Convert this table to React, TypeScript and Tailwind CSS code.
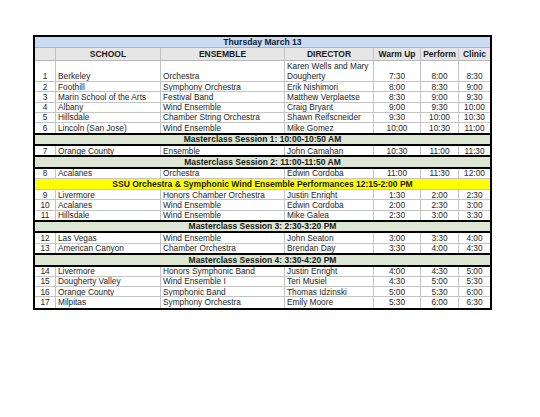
import React from 'react';

type Row =
  | { kind: 'data'; n: number; school: string; ensemble: string; director: string; warm: string; perform: string; clinic: string }
  | { kind: 'session' | 'ssu'; label: string };

const rows: Row[] = [
  { kind: 'data', n: 2, school: 'Foothill', ensemble: 'Symphony Orchestra', director: 'Erik Nishimori', warm: '8:00', perform: '8:30', clinic: '9:00' },
  { kind: 'data', n: 3, school: 'Marin School of the Arts', ensemble: 'Festival Band', director: 'Matthew Verplaetse', warm: '8:30', perform: '9:00', clinic: '9:30' },
  { kind: 'data', n: 4, school: 'Albany', ensemble: 'Wind Ensemble', director: 'Craig Bryant', warm: '9:00', perform: '9:30', clinic: '10:00' },
  { kind: 'data', n: 5, school: 'Hillsdale', ensemble: 'Chamber String Orchestra', director: 'Shawn Reifscneider', warm: '9:30', perform: '10:00', clinic: '10:30' },
  { kind: 'data', n: 6, school: 'Lincoln (San Jose)', ensemble: 'Wind Ensemble', director: 'Mike Gomez', warm: '10:00', perform: '10:30', clinic: '11:00' },
  { kind: 'session', label: 'Masterclass Session 1: 10:00-10:50 AM' },
  { kind: 'data', n: 7, school: 'Orange County', ensemble: 'Ensemble', director: 'John Camahan', warm: '10:30', perform: '11:00', clinic: '11:30' },
  { kind: 'session', label: 'Masterclass Session 2: 11:00-11:50 AM' },
  { kind: 'data', n: 8, school: 'Acalanes', ensemble: 'Orchestra', director: 'Edwin Cordoba', warm: '11:00', perform: '11:30', clinic: '12:00' },
  { kind: 'ssu', label: 'SSU Orchestra & Symphonic Wind Ensemble Performances 12:15-2:00 PM' },
  { kind: 'data', n: 9, school: 'Livermore', ensemble: 'Honors Chamber Orchestra', director: 'Justin Enright', warm: '1:30', perform: '2:00', clinic: '2:30' },
  { kind: 'data', n: 10, school: 'Acalanes', ensemble: 'Wind Ensemble', director: 'Edwin Cordoba', warm: '2:00', perform: '2:30', clinic: '3:00' },
  { kind: 'data', n: 11, school: 'Hillsdale', ensemble: 'Wind Ensemble', director: 'Mike Galea', warm: '2:30', perform: '3:00', clinic: '3:30' },
  { kind: 'session', label: 'Masterclass Session 3: 2:30-3:20 PM' },
  { kind: 'data', n: 12, school: 'Las Vegas', ensemble: 'Wind Ensemble', director: 'John Seaton', warm: '3:00', perform: '3:30', clinic: '4:00' },
  { kind: 'data', n: 13, school: 'American Canyon', ensemble: 'Chamber Orchestra', director: 'Brendan Day', warm: '3:30', perform: '4:00', clinic: '4:30' },
  { kind: 'session', label: 'Masterclass Session 4: 3:30-4:20 PM' },
  { kind: 'data', n: 14, school: 'Livermore', ensemble: 'Honors Symphonic Band', director: 'Justin Enright', warm: '4:00', perform: '4:30', clinic: '5:00' },
  { kind: 'data', n: 15, school: 'Dougherty Valley', ensemble: 'Wind Ensemble I', director: 'Teri Musiel', warm: '4:30', perform: '5:00', clinic: '5:30' },
  { kind: 'data', n: 16, school: 'Orange County', ensemble: 'Symphonic Band', director: 'Thomas Idzinski', warm: '5:00', perform: '5:30', clinic: '6:00' },
  { kind: 'data', n: 17, school: 'Milpitas', ensemble: 'Symphony Orchestra', director: 'Emily Moore', warm: '5:30', perform: '6:00', clinic: '6:30' },
];

const cols = 'grid grid-cols-[20px_105px_124px_89px_47px_38px_32px]';
const cell = 'flex items-center border-l border-[#c4c4c4] overflow-hidden whitespace-nowrap';

export default function App() {
  return (
    <div className="w-[540px] h-[417px] bg-white pt-[35px] pl-[33px] text-[8.3px] leading-none text-[#262626] font-['Liberation_Sans',Arial,sans-serif]">
      <div className="w-[459px] border-2 border-black">
        {/* title */}
        <div className="h-[11px] bg-[#c9dcf3] border-b border-[#a9b4c2] flex items-center justify-center font-bold text-[8.6px] text-[#10203a]">
          Thursday March 13
        </div>
        {/* header */}
        <div className={`${cols} h-[13px] bg-[#e6e6e6] border-b border-[#b8b8b8] font-bold text-[8.5px] text-[#1a1a1a]`}>
          <div />
          <div className="flex items-center justify-center border-l border-[#c4c4c4]">SCHOOL</div>
          <div className="flex items-center justify-center border-l border-[#c4c4c4]">ENSEMBLE</div>
          <div className="flex items-center justify-center border-l border-[#c4c4c4]">DIRECTOR</div>
          <div className="flex items-center justify-center border-l border-[#c4c4c4]">Warm Up</div>
          <div className="flex items-center justify-center border-l border-[#c4c4c4]">Perform</div>
          <div className="flex items-center justify-center border-l border-[#c4c4c4]">Clinic</div>
        </div>
        {/* first, tall row */}
        <div className={`${cols} h-[21px] border-b border-[#c4c4c4]`}>
          <div className="flex items-end justify-center pb-[2px]">1</div>
          <div className="flex items-end pb-[2px] pl-[2px] border-l border-[#c4c4c4]">Berkeley</div>
          <div className="flex items-end pb-[2px] pl-[2px] border-l border-[#c4c4c4]">Orchestra</div>
          <div className="flex items-end pb-[1px] pl-[2px] border-l border-[#c4c4c4] leading-[10px]">
            Karen Wells and Mary
            <br />
            Dougherty
          </div>
          <div className="flex items-end justify-center pb-[2px] border-l border-[#c4c4c4]">7:30</div>
          <div className="flex items-end justify-center pb-[2px] border-l border-[#c4c4c4]">8:00</div>
          <div className="flex items-end justify-center pb-[2px] border-l border-[#c4c4c4]">8:30</div>
        </div>
        {rows.map((r, i) => {
          const next = rows[i + 1];
          const last = i === rows.length - 1;
          const heavy = r.kind === 'session' || (next && next.kind === 'session');
          let border = heavy ? 'border-b-2 border-b-black' : 'border-b border-b-[#c4c4c4]';
          if (last) border = '';
          if (r.kind === 'session') {
            return (
              <div key={i} className={`h-[11.4px] bg-[#dce6d2] flex items-center justify-center font-bold text-[8.5px] text-[#1a1a1a] ${border}`}>
                {r.label}
              </div>
            );
          }
          if (r.kind === 'ssu') {
            return (
              <div key={i} className={`h-[11px] bg-[#ffff00] flex items-center justify-center font-bold text-[8.5px] text-[#1a1a1a] ${border}`}>
                {r.label}
              </div>
            );
          }
          return (
            <div key={i} className={`${cols} ${heavy ? 'h-[11.4px]' : 'h-[10.3px]'} ${border}`}>
              <div className="flex items-center justify-center">{r.n}</div>
              <div className={`${cell} pl-[2px]`}>{r.school}</div>
              <div className={`${cell} pl-[2px]`}>{r.ensemble}</div>
              <div className={`${cell} pl-[2px]`}>{r.director}</div>
              <div className={`${cell} justify-center`}>{r.warm}</div>
              <div className={`${cell} justify-center`}>{r.perform}</div>
              <div className={`${cell} justify-center`}>{r.clinic}</div>
            </div>
          );
        })}
      </div>
    </div>
  );
}
